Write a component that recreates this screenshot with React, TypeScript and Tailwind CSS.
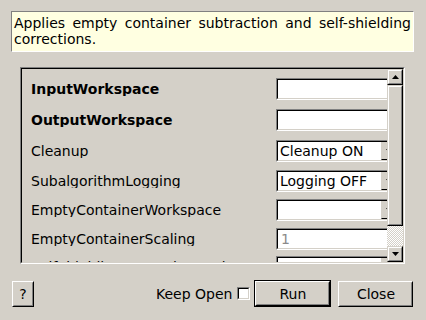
import React from "react";

const sunken =
  "border-t-[#808080] border-l-[#808080] border-b-white border-r-white";

function Field({ children, disabled }: { children?: React.ReactNode; disabled?: boolean }) {
  return (
    <div className={`w-[123px] h-[22px] shrink-0 border ${sunken} bg-white`}>
      <div className="w-full h-full border border-t-black border-l-black border-b-[#d4d0c8] border-r-[#d4d0c8] flex items-center pl-[3px] text-[14px] leading-none">
        <span className={disabled ? "text-[#8a8a8a]" : "text-black"}>{children}</span>
      </div>
    </div>
  );
}

function Combo({ value }: { value?: string }) {
  return (
    <div className={`w-[123px] h-[22px] shrink-0 border ${sunken} bg-white`}>
      <div className="w-full h-full border border-t-black border-l-black border-b-[#d4d0c8] border-r-[#d4d0c8] flex items-center text-[14px] leading-none">
        <span className="flex-1 pl-[2px] text-black">{value}</span>
        <div className="w-[16px] h-full border border-t-[#d4d0c8] border-l-[#d4d0c8] border-b-black border-r-black bg-[#d4d0c8] flex items-center justify-center">
          <svg width="7" height="4" viewBox="0 0 7 4">
            <polygon points="0,0 7,0 3.5,4" fill="black" />
          </svg>
        </div>
      </div>
    </div>
  );
}

function Row({
  label,
  bold,
  children,
  mt,
}: {
  label: string;
  bold?: boolean;
  children: React.ReactNode;
  mt: string;
}) {
  return (
    <div className={`flex items-center h-[22px] ${mt}`}>
      <div className={`w-[245px] shrink-0 whitespace-nowrap overflow-hidden text-[14px] leading-none text-black ${bold ? "font-bold" : ""}`}>
        {label}
      </div>
      {children}
    </div>
  );
}

function ArrowBtn({ up }: { up?: boolean }) {
  return (
    <div className="w-[16px] h-[16px] shrink-0 border border-t-[#d4d0c8] border-l-[#d4d0c8] border-b-black border-r-black bg-[#d4d0c8]">
      <div className="w-full h-full border border-t-white border-l-white border-b-[#808080] border-r-[#808080] flex items-center justify-center">
        <svg width="7" height="4" viewBox="0 0 7 4">
          {up ? (
            <polygon points="0,4 7,4 3.5,0" fill="black" />
          ) : (
            <polygon points="0,0 7,0 3.5,4" fill="black" />
          )}
        </svg>
      </div>
    </div>
  );
}

function Button({ children, w, isDefault }: { children: React.ReactNode; w: string; isDefault?: boolean }) {
  const inner = (
    <div className="w-full h-full border border-t-white border-l-white border-b-black border-r-black">
      <div className="w-full h-full border border-t-[#d4d0c8] border-l-[#d4d0c8] border-b-[#808080] border-r-[#808080] flex items-center justify-center text-[14px] leading-none text-black">
        {children}
      </div>
    </div>
  );
  return isDefault ? (
    <div className={`${w} h-[27px] border border-black`}>{inner}</div>
  ) : (
    <div className={`${w} h-[26px]`}>{inner}</div>
  );
}

export default function App() {
  return (
    <div
      className="w-[426px] h-[320px] bg-[#d4d0c8] flex flex-col overflow-hidden"
      style={{ fontFamily: "'DejaVu Sans', sans-serif" }}
    >
      <div className="mt-[11px] ml-[11px] w-[403px] h-[41px] border border-t-[#808080] border-l-[#808080] border-b-white border-r-white bg-[#ffffe1] px-[2px] pt-[3px]">
        <p className="text-[14px] leading-[16px] text-black text-justify">
          Applies empty container subtraction and self-shielding corrections.
        </p>
      </div>

      <div className={`mt-[15px] ml-[20px] w-[385px] h-[197px] border ${sunken}`}>
        <div className="w-full h-full border border-t-black border-l-black border-b-[#d4d0c8] border-r-[#d4d0c8] flex">
          <div className="flex-1 overflow-hidden pl-[9px] pt-[9px]">
            <div className="w-[400px]">
              <Row label="InputWorkspace" bold mt="mt-0">
                <Field />
              </Row>
              <Row label="OutputWorkspace" bold mt="mt-[9px]">
                <Field />
              </Row>
              <Row label="Cleanup" mt="mt-[9px]">
                <Combo value="Cleanup ON" />
              </Row>
              <Row label="SubalgorithmLogging" mt="mt-[8px]">
                <Combo value="Logging OFF" />
              </Row>
              <Row label="EmptyContainerWorkspace" mt="mt-[7px]">
                <Combo />
              </Row>
              <Row label="EmptyContainerScaling" mt="mt-[7px]">
                <Field disabled>1</Field>
              </Row>
              <Row label="SelfShieldingCorrectionWorkspace" mt="mt-[6px]">
                <Combo />
              </Row>
            </div>
          </div>
          <div className="w-[16px] shrink-0 flex flex-col">
            <ArrowBtn up />
            <div className="h-[141px] shrink-0 border border-t-[#d4d0c8] border-l-[#d4d0c8] border-b-black border-r-black bg-[#d4d0c8]">
              <div className="w-full h-full border border-t-white border-l-white border-b-[#808080] border-r-[#808080]" />
            </div>
            <div className="flex-1 bg-[repeating-conic-gradient(#ffffff_0%_25%,#d4d0c8_0%_50%)] bg-[length:2px_2px]" />
            <ArrowBtn />
          </div>
        </div>
      </div>

      <div className="mt-[16px] flex items-center h-[27px]">
        <div className="ml-[12px]">
          <Button w="w-[22px]">?</Button>
        </div>
        <div className="ml-[122px] text-[14px] leading-none text-black">Keep Open</div>
        <div className="ml-[5px] w-[13px] h-[13px] border border-t-[#808080] border-l-[#808080] border-b-white border-r-white">
          <div className="w-full h-full border border-t-black border-l-black border-b-[#d4d0c8] border-r-[#d4d0c8] bg-white" />
        </div>
        <div className="ml-[4px]">
          <Button w="w-[77px]" isDefault>Run</Button>
        </div>
        <div className="ml-[7px]">
          <Button w="w-[75px]">Close</Button>
        </div>
      </div>
    </div>
  );
}
